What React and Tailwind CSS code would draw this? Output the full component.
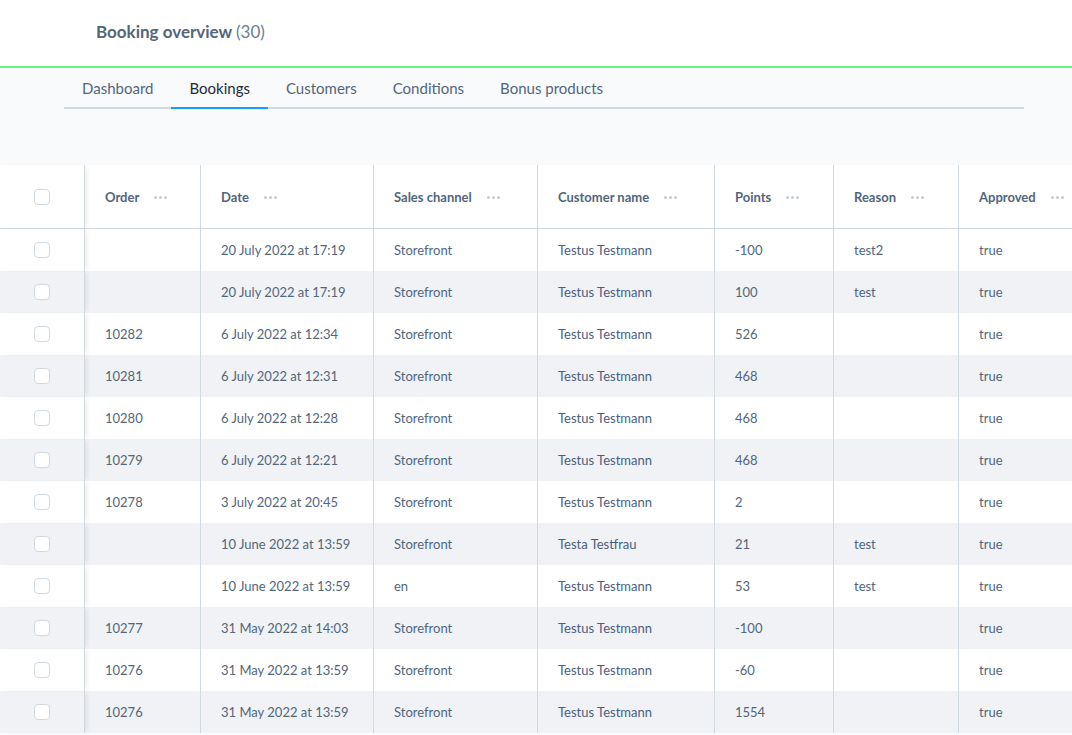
import React from "react";

const columns = [
  { key: "order", label: "Order", w: "w-[116px]" },
  { key: "date", label: "Date", w: "w-[173px]" },
  { key: "channel", label: "Sales channel", w: "w-[164px]" },
  { key: "customer", label: "Customer name", w: "w-[177px]" },
  { key: "points", label: "Points", w: "w-[119px]" },
  { key: "reason", label: "Reason", w: "w-[125px]" },
  { key: "approved", label: "Approved", w: "w-[200px]" },
];

const rows = [
  { order: "", date: "20 July 2022 at 17:19", channel: "Storefront", customer: "Testus Testmann", points: "-100", reason: "test2", approved: "true" },
  { order: "", date: "20 July 2022 at 17:19", channel: "Storefront", customer: "Testus Testmann", points: "100", reason: "test", approved: "true" },
  { order: "10282", date: "6 July 2022 at 12:34", channel: "Storefront", customer: "Testus Testmann", points: "526", reason: "", approved: "true" },
  { order: "10281", date: "6 July 2022 at 12:31", channel: "Storefront", customer: "Testus Testmann", points: "468", reason: "", approved: "true" },
  { order: "10280", date: "6 July 2022 at 12:28", channel: "Storefront", customer: "Testus Testmann", points: "468", reason: "", approved: "true" },
  { order: "10279", date: "6 July 2022 at 12:21", channel: "Storefront", customer: "Testus Testmann", points: "468", reason: "", approved: "true" },
  { order: "10278", date: "3 July 2022 at 20:45", channel: "Storefront", customer: "Testus Testmann", points: "2", reason: "", approved: "true" },
  { order: "", date: "10 June 2022 at 13:59", channel: "Storefront", customer: "Testa Testfrau", points: "21", reason: "test", approved: "true" },
  { order: "", date: "10 June 2022 at 13:59", channel: "en", customer: "Testus Testmann", points: "53", reason: "test", approved: "true" },
  { order: "10277", date: "31 May 2022 at 14:03", channel: "Storefront", customer: "Testus Testmann", points: "-100", reason: "", approved: "true" },
  { order: "10276", date: "31 May 2022 at 13:59", channel: "Storefront", customer: "Testus Testmann", points: "-60", reason: "", approved: "true" },
  { order: "10276", date: "31 May 2022 at 13:59", channel: "Storefront", customer: "Testus Testmann", points: "1554", reason: "", approved: "true" },
];

const tabs = ["Dashboard", "Bookings", "Customers", "Conditions", "Bonus products"];

function Checkbox() {
  return <span className="block h-4 w-4 rounded-[4px] border border-[#d1d9e0] bg-white" />;
}

function Dots() {
  return (
    <span className="ml-[15px] flex gap-[2px]">
      <span className="h-[3px] w-[3px] rounded-full bg-[#c4ccd6]" />
      <span className="h-[3px] w-[3px] rounded-full bg-[#c4ccd6]" />
      <span className="h-[3px] w-[3px] rounded-full bg-[#c4ccd6]" />
    </span>
  );
}

export default function App() {
  return (
    <div className="h-[735px] w-[1072px] overflow-hidden bg-[#f9fafb] font-['Source_Sans_Pro','Lato',sans-serif] text-[#52667a]">
      {/* Header */}
      <div className="flex h-[68px] items-center border-b-2 border-[#64f57f] bg-white pb-[3px] pl-[96px]">
        <h1 className="text-[17px] font-bold">
          Booking overview <span className="font-normal text-[#6b7d90]">(30)</span>
        </h1>
      </div>

      {/* Tabs */}
      <div className="h-[97px] pl-[64px] pr-[48px]">
        <div className="flex border-b-2 border-[#d1d9e0]">
          {tabs.map((t) => (
            <div
              key={t}
              className={
                t === "Bookings"
                  ? "-mb-[2px] flex h-[41px] items-center border-b-2 border-[#189eff] px-[18px] pt-[2px] text-[15px] text-[#1c2b3a]"
                  : "-mb-[2px] flex h-[41px] items-center border-b-2 border-transparent px-[18px] pt-[2px] text-[15px] text-[#52667a]"
              }
            >
              {t}
            </div>
          ))}
        </div>
      </div>

      {/* Table */}
      <div className="bg-white">
        <div className="flex h-[64px] border-b border-[#d1d9e0]">
          <div className="relative z-10 flex w-[85px] shrink-0 items-center justify-center border-r border-[#d1d9e0] bg-white shadow-[4px_0_5px_-2px_rgba(0,0,0,0.08)]">
            <Checkbox />
          </div>
          {columns.map((c, i) => (
            <div
              key={c.key}
              className={`${c.w} flex shrink-0 items-center pl-[20px] pt-[2px] text-[13px] font-bold ${i < columns.length - 1 ? "border-r border-[#d1d9e0]" : ""}`}
            >
              {c.label}
              <Dots />
            </div>
          ))}
        </div>
        {rows.map((r, ri) => (
          <div key={ri} className={`flex h-[42px] ${ri % 2 === 1 ? "bg-[#f0f2f5]" : "bg-white"}`}>
            <div className="relative z-10 flex w-[85px] shrink-0 items-center justify-center border-r border-[#d1d9e0] shadow-[4px_0_5px_-2px_rgba(0,0,0,0.08)]">
              <Checkbox />
            </div>
            {columns.map((c, i) => (
              <div
                key={c.key}
                className={`${c.w} flex shrink-0 items-center pl-[20px] pt-[2px] text-[13px] ${i < columns.length - 1 ? "border-r border-[#d1d9e0]" : ""} ${c.key === "customer" ? "text-[#4a5f80]" : ""}`}
              >
                {r[c.key]}
              </div>
            ))}
          </div>
        ))}
      </div>
    </div>
  );
}
